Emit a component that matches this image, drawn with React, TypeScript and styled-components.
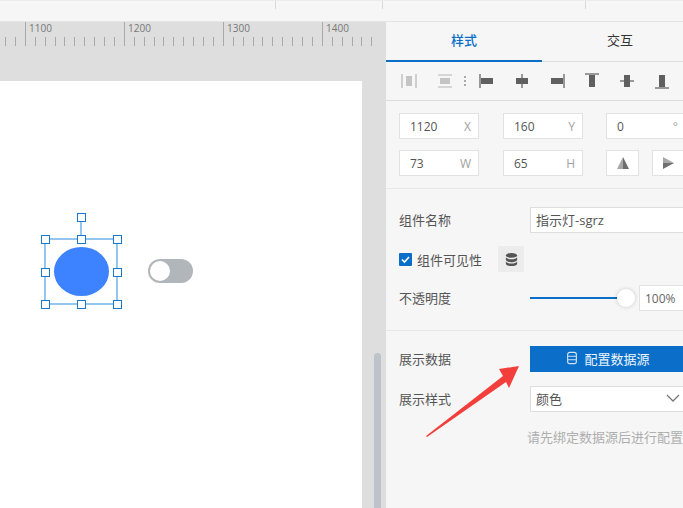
import React from 'react';
import styled, { createGlobalStyle } from 'styled-components';

const GlobalStyle = createGlobalStyle`
  html, body {
    margin: 0;
    padding: 0;
    width: 683px;
    height: 508px;
    overflow: hidden;
    background: #f6f6f6;
    font-family: "Open Sans", "Noto Sans CJK SC", sans-serif;
  }
  * { box-sizing: border-box; }
`;

const Page = styled.div`
  width: 683px;
  height: 508px;
  display: flex;
  flex-direction: column;
  overflow: hidden;
  position: relative;
`;

const TopBar = styled.div`
  height: 22px;
  flex: none;
  background: #f6f6f6;
  border-top: 1px solid #ececec;
  border-bottom: 1px solid #e4e4e4;
  position: relative;
`;

const TopTick = styled.span<{ $x: number }>`
  position: absolute;
  top: 0;
  left: ${p => p.$x}px;
  width: 1px;
  height: 8px;
  background: #d8d8d8;
`;

const Body = styled.div`
  flex: 1;
  display: flex;
  min-height: 0;
`;

const Workspace = styled.div`
  width: 386px;
  flex: none;
  background: #dedede;
  display: flex;
  flex-direction: column;
  position: relative;
`;

const Ruler = styled.div`
  height: 24px;
  flex: none;
  position: relative;
  overflow: hidden;
`;

const Tick = styled.span<{ $x: number; $major: boolean }>`
  position: absolute;
  left: ${p => p.$x}px;
  top: ${p => (p.$major ? 0 : 15)}px;
  width: 1px;
  height: ${p => (p.$major ? 24 : 9)}px;
  background: #a9a9a9;
`;

const TickLabel = styled.span<{ $x: number }>`
  position: absolute;
  left: ${p => p.$x}px;
  top: 0;
  font-size: 10px;
  line-height: 13px;
  color: #777;
`;

const Canvas = styled.div`
  width: 362px;
  margin-top: 35px;
  flex: 1;
  background: #fff;
  position: relative;
`;

const Selection = styled.div`
  position: absolute;
  left: 44px;
  top: 157px;
  width: 74px;
  height: 67px;
  border: 2px solid #94c5ee;
`;

const RotateStem = styled.span`
  position: absolute;
  left: 34px;
  top: -22px;
  width: 2px;
  height: 22px;
  background: #94c5ee;
`;

const Handle = styled.span<{ $x: number; $y: number }>`
  position: absolute;
  left: ${p => p.$x}px;
  top: ${p => p.$y}px;
  width: 9px;
  height: 9px;
  background: #fff;
  border: 1px solid #1a78cc;
`;

const Lamp = styled.div`
  position: absolute;
  left: 8px;
  top: 7px;
  width: 55px;
  height: 49px;
  border-radius: 50%;
  background: #3d83ff;
`;

const Toggle = styled.div`
  position: absolute;
  left: 148px;
  top: 178px;
  width: 45px;
  height: 24px;
  border-radius: 12px;
  background: #b0b6ba;
`;

const Knob = styled.span`
  position: absolute;
  left: 2px;
  top: 2px;
  width: 20px;
  height: 20px;
  border-radius: 50%;
  background: #fff;
`;

const Scrollbar = styled.div`
  position: absolute;
  right: 5px;
  top: 331px;
  bottom: 0;
  width: 7px;
  background: #bcc4ca;
  border-radius: 4px 4px 0 0;
`;

const Panel = styled.aside`
  flex: 1;
  min-width: 0;
  background: #f6f6f6;
  display: flex;
  flex-direction: column;
  overflow: hidden;
`;

const Tabs = styled.div`
  display: flex;
  height: 40px;
  flex: none;
  border-bottom: 1px solid #dcdcdc;
`;

const Tab = styled.div<{ $active?: boolean }>`
  width: 156px;
  height: 40px;
  flex: none;
  display: flex;
  align-items: center;
  justify-content: center;
  padding-bottom: 4px;
  font-size: 13px;
  color: ${p => (p.$active ? '#0b6fc9' : '#333')};
  font-weight: ${p => (p.$active ? 500 : 400)};
  border-bottom: 2px solid ${p => (p.$active ? '#0b6fc9' : 'transparent')};
`;

const AlignBar = styled.div`
  height: 39px;
  flex: none;
  display: flex;
  align-items: center;
  padding-left: 14px;
  border-bottom: 1px solid #dcdcdc;
`;

const AlignIcon = styled.svg<{ $gap: number }>`
  width: 18px;
  height: 18px;
  flex: none;
  margin-right: ${p => p.$gap}px;
`;

const Dots = styled.span`
  width: 2px;
  height: 10px;
  flex: none;
  margin-right: 12px;
  background: repeating-linear-gradient(#aaa 0 2px, transparent 2px 4px);
`;

const GeometrySection = styled.div`
  flex: none;
  height: 88px;
  padding: 12px 0 0 13px;
  display: grid;
  grid-template-columns: 104px 103px 1fr;
  grid-auto-rows: 26px;
  row-gap: 11px;
  border-bottom: 1px solid #e8e8e8;
`;

const NumberField = styled.div`
  width: 80px;
  height: 26px;
  background: #fff;
  border: 1px solid #e2e2e2;
  display: flex;
  align-items: center;
  justify-content: space-between;
  padding: 0 7px 0 10px;
  font-size: 12px;
  color: #555;
`;

const FieldUnit = styled.span`
  color: #a2a2a2;
`;

const FlipRow = styled.div`
  display: flex;
  gap: 13px;
`;

const FlipButton = styled.div`
  width: 33px;
  height: 26px;
  flex: none;
  background: #fff;
  border: 1px solid #e2e2e2;
  display: flex;
  align-items: center;
  justify-content: center;
`;

const PropsSection = styled.div`
  flex: none;
  height: 142px;
  padding: 18px 0 0 13px;
  display: flex;
  flex-direction: column;
  border-bottom: 1px solid #e8e8e8;
`;

const DataSection = styled.div`
  flex: 1;
  padding: 15px 0 0 13px;
  display: flex;
  flex-direction: column;
`;

const Row = styled.div<{ $mb?: number }>`
  display: flex;
  align-items: center;
  height: 26px;
  flex: none;
  margin-bottom: ${p => p.$mb ?? 0}px;
`;

const Label = styled.span`
  width: 131px;
  flex: none;
  padding-bottom: 2px;
  font-size: 13px;
  color: #555;
`;

const TextField = styled.div`
  width: 170px;
  height: 26px;
  flex: none;
  background: #fff;
  border: 1px solid #dedede;
  display: flex;
  align-items: center;
  justify-content: space-between;
  padding: 0 19px 2px 5px;
  font-size: 13px;
  color: #555;
`;

const CheckBox = styled.span`
  width: 13px;
  height: 13px;
  flex: none;
  background: #0b6fc9;
  border-radius: 1px;
  display: flex;
  align-items: center;
  justify-content: center;
  margin-right: 5px;
`;

const CheckLabel = styled.span`
  font-size: 13px;
  color: #555;
  margin-right: 16px;
`;

const DbButton = styled.div`
  width: 26px;
  height: 26px;
  flex: none;
  background: #ececec;
  display: flex;
  align-items: center;
  justify-content: center;
`;

const Slider = styled.div`
  width: 96px;
  height: 2px;
  flex: none;
  background: #0b6fc9;
  position: relative;
  margin-right: 13px;
`;

const SliderKnob = styled.span`
  position: absolute;
  right: -9px;
  top: -8px;
  width: 18px;
  height: 18px;
  border-radius: 50%;
  background: #fff;
  box-shadow: 0 0 4px rgba(0, 0, 0, 0.18);
`;

const PercentField = styled.div`
  width: 60px;
  height: 26px;
  flex: none;
  background: #fff;
  border: 1px solid #e2e2e2;
  display: flex;
  align-items: center;
  padding-left: 5px;
  font-size: 12px;
  color: #666;
`;

const DataButton = styled.div`
  width: 170px;
  height: 26px;
  flex: none;
  background: #0b6fc9;
  color: #eef6fc;
  font-size: 13px;
  display: flex;
  align-items: center;
  justify-content: center;
  gap: 5px;
  padding: 0 15px 2px 0;
`;

const Hint = styled.div`
  margin-left: 128px;
  margin-top: 16px;
  font-size: 13px;
  line-height: 18px;
  color: #aeaeae;
  white-space: nowrap;
`;

const Arrow = styled.svg`
  position: absolute;
  left: 420px;
  top: 360px;
  width: 105px;
  height: 80px;
  pointer-events: none;
`;

const rulerStart = 25;
const ticks = Array.from({ length: 38 }, (_, i) => i).map(i => ({
  x: rulerStart - 20 + i * 9.9,
  major: (i - 2) % 10 === 0,
}));
const labels = [
  { x: 29, text: '1100' },
  { x: 128, text: '1200' },
  { x: 227, text: '1300' },
  { x: 326, text: '1400' },
];

const handles = [
  [-5, -5], [31, -5], [67, -5],
  [-5, 28], [67, 28],
  [-5, 60], [31, 60], [67, 60],
  [31, -27],
];

const alignIcons = [
  { gap: 18, color: '#b5b5b5', d: 'M2 2v14M16 2v14', r: [6, 4, 6, 10] },
  { gap: 10, color: '#b5b5b5', d: 'M2 3h14M2 15h14', r: [4, 6, 10, 6] },
];
const alignRest = [
  { d: 'M2 2v14', r: [3, 6, 12, 6] },
  { d: 'M9 2v14', r: [3, 6, 12, 6] },
  { d: 'M16 2v14', r: [3, 6, 12, 6] },
  { d: 'M2 2h14', r: [6, 3, 6, 12] },
  { d: 'M2 9h14', r: [6, 3, 6, 12] },
  { d: 'M2 16h14', r: [6, 3, 6, 12] },
];

const DbIcon = ({ color, size, outline }: { color: string; size: number; outline?: boolean }) => (
  <svg width={size} height={size} viewBox="0 0 16 16">
    {outline ? (
      <g fill="none" stroke={color} strokeWidth="1.3">
        <rect x="3" y="1.5" width="10" height="13" rx="2.5" />
        <path d="M3 6h10M3 10h10" />
      </g>
    ) : (
      <g fill={color}>
        <ellipse cx="8" cy="3.6" rx="6" ry="2.6" />
        <path d="M2 5.6c1 1.6 3.400 2.200 6 2.200s5-.6 6-2.200v2.600c0 1.400-2.700 2.600-6 2.600s-6-1.200-6-2.600z" />
        <path d="M2 10c1 1.600 3.400 2.200 6 2.200s5-.6 6-2.200v2.400c0 1.400-2.700 2.600-6 2.600s-6-1.200-6-2.600z" />
      </g>
    )}
  </svg>
);

export default function App() {
  return (
    <Page>
      <GlobalStyle />
      <TopBar>
        <TopTick $x={275} />
        <TopTick $x={382} />
        <TopTick $x={585} />
      </TopBar>
      <Body>
        <Workspace>
          <Ruler>
            {ticks.map(t => (
              <Tick key={t.x} $x={Math.round(t.x)} $major={t.major} />
            ))}
            {labels.map(l => (
              <TickLabel key={l.text} $x={l.x}>{l.text}</TickLabel>
            ))}
          </Ruler>
          <Canvas>
            <Selection>
              <RotateStem />
              <Lamp />
              {handles.map(([x, y]) => (
                <Handle key={`${x}-${y}`} $x={x} $y={y} />
              ))}
            </Selection>
            <Toggle>
              <Knob />
            </Toggle>
          </Canvas>
          <Scrollbar />
        </Workspace>
        <Panel>
          <Tabs>
            <Tab $active>样式</Tab>
            <Tab>交互</Tab>
          </Tabs>
          <AlignBar>
            {alignIcons.map((icon, i) => (
              <AlignIcon key={i} $gap={icon.gap} viewBox="0 0 18 18">
                <path d={icon.d} stroke={icon.color} strokeWidth="1.2" fill="none" />
                <rect x={icon.r[0]} y={icon.r[1]} width={icon.r[2]} height={icon.r[3]} fill="#c4c4c4" />
              </AlignIcon>
            ))}
            <Dots />
            {alignRest.map((icon, i) => (
              <AlignIcon key={i} $gap={17} viewBox="0 0 18 18">
                <path d={icon.d} stroke="#666" strokeWidth="1.3" fill="none" />
                <rect x={icon.r[0]} y={icon.r[1]} width={icon.r[2]} height={icon.r[3]} fill="#606060" />
              </AlignIcon>
            ))}
          </AlignBar>
          <GeometrySection>
            <NumberField>1120<FieldUnit>X</FieldUnit></NumberField>
            <NumberField>160<FieldUnit>Y</FieldUnit></NumberField>
            <NumberField>0<FieldUnit>°</FieldUnit></NumberField>
            <NumberField>73<FieldUnit>W</FieldUnit></NumberField>
            <NumberField>65<FieldUnit>H</FieldUnit></NumberField>
            <FlipRow>
              <FlipButton>
                <svg width="16" height="14" viewBox="0 0 16 14">
                  <path d="M8 1L2 13h6z" fill="#a8a8a8" />
                  <path d="M8 1l6 12H8z" fill="#6f6f6f" />
                </svg>
              </FlipButton>
              <FlipButton>
                <svg width="14" height="16" viewBox="0 0 14 16">
                  <path d="M1 2l11 6H1z" fill="#a8a8a8" />
                  <path d="M1 14l11-6H1z" fill="#6f6f6f" />
                </svg>
              </FlipButton>
            </FlipRow>
          </GeometrySection>
          <PropsSection>
            <Row $mb={13}>
              <Label>组件名称</Label>
              <TextField>指示灯-sgrz</TextField>
            </Row>
            <Row $mb={13}>
              <CheckBox>
                <svg width="11" height="11" viewBox="0 0 11 11">
                  <path d="M2 5.500l2.500 2.500L9 3" stroke="#fff" strokeWidth="1.600" fill="none" />
                </svg>
              </CheckBox>
              <CheckLabel>组件可见性</CheckLabel>
              <DbButton>
                <DbIcon color="#555" size={15} />
              </DbButton>
            </Row>
            <Row>
              <Label>不透明度</Label>
              <Slider>
                <SliderKnob />
              </Slider>
              <PercentField>100%</PercentField>
            </Row>
          </PropsSection>
          <DataSection>
            <Row $mb={14}>
              <Label>展示数据</Label>
              <DataButton>
                <DbIcon color="#cfe3f5" size={14} outline />
                配置数据源
              </DataButton>
            </Row>
            <Row>
              <Label>展示样式</Label>
              <TextField>
                颜色
                <svg width="14" height="9" viewBox="0 0 14 9">
                  <path d="M1 1l6 6 6-6" stroke="#777" strokeWidth="1.3" fill="none" />
                </svg>
              </TextField>
            </Row>
            <Hint>请先绑定数据源后进行配置</Hint>
          </DataSection>
        </Panel>
      </Body>
      <Arrow viewBox="0 0 105 80">
        <path d="M6 76L83 16 79 9 99 6 89 28 86 22 7 77z" fill="#f33f3b" />
      </Arrow>
    </Page>
  );
}
